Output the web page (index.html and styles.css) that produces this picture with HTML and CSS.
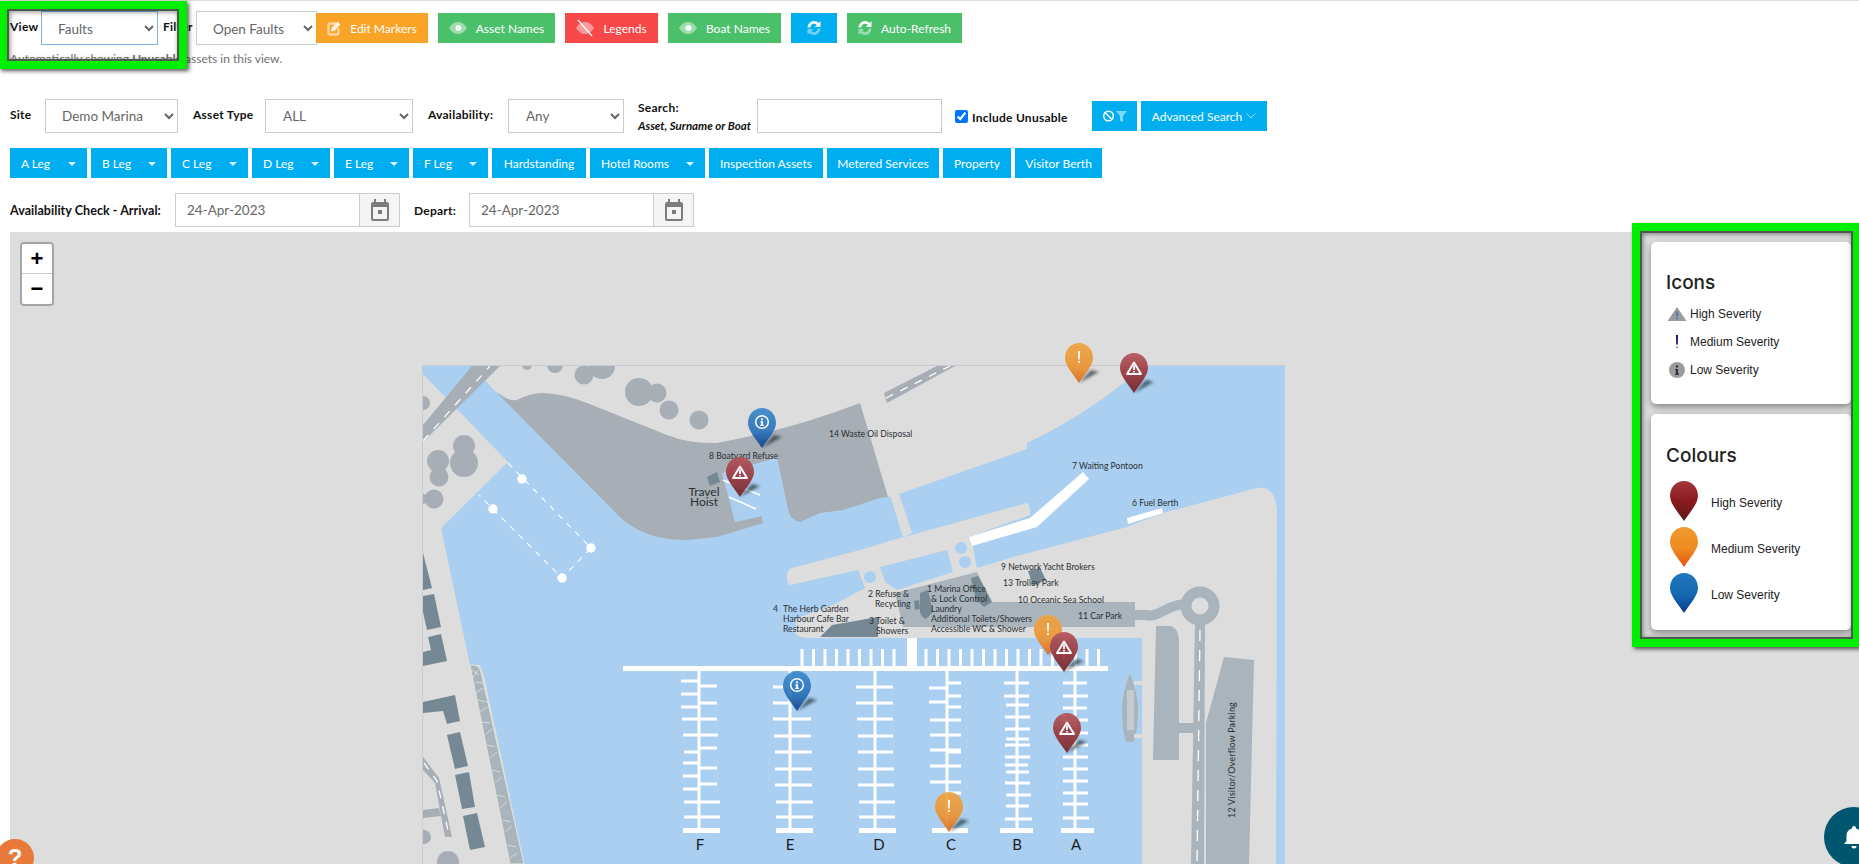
FILE: index.html
```html
<!DOCTYPE html>
<html lang="en">
<head>
    <meta charset="UTF-8">
    <title>Asset Map</title>
    <link rel="stylesheet" href="styles.css">
</head>
<body>
    <svg class="defs" width="0" height="0">
        <defs>
            <clipPath id="planClip"><rect x="422" y="365" width="863" height="499"/></clipPath>
            <linearGradient id="gradRed" x1="0" y1="0" x2="0" y2="1"><stop offset="0" stop-color="#b5545a"/><stop offset=".55" stop-color="#96343a"/><stop offset="1" stop-color="#6e2228"/></linearGradient>
            <linearGradient id="gradOrange" x1="0" y1="0" x2="0" y2="1"><stop offset="0" stop-color="#f0a33f"/><stop offset=".6" stop-color="#ea9432"/><stop offset="1" stop-color="#dc6a1c"/></linearGradient>
            <linearGradient id="gradBlue" x1="0" y1="0" x2="0" y2="1"><stop offset="0" stop-color="#3a8ccb"/><stop offset=".6" stop-color="#2a70b8"/><stop offset="1" stop-color="#123f8c"/></linearGradient>
            <linearGradient id="legRed" x1="0" y1="0" x2="0" y2="1"><stop offset="0" stop-color="#a3383c"/><stop offset=".5" stop-color="#8b1a1e"/><stop offset="1" stop-color="#5c1a1c"/></linearGradient>
            <linearGradient id="legOrange" x1="0" y1="0" x2="0" y2="1"><stop offset="0" stop-color="#f19a30"/><stop offset=".55" stop-color="#ee8a20"/><stop offset="1" stop-color="#e4530c"/></linearGradient>
            <linearGradient id="legBlue" x1="0" y1="0" x2="0" y2="1"><stop offset="0" stop-color="#1f78bf"/><stop offset=".55" stop-color="#1468b0"/><stop offset="1" stop-color="#0b3a8c"/></linearGradient>
            <filter id="blur"><feGaussianBlur stdDeviation="1.6"/></filter>
            <path id="drop" d="M14 0C6 0 0 6.500 0 15C0 22 7 30 14 40C21 30 28 22 28 15C28 6.500 22 0 14 0Z"/>
            <symbol id="pinShadow" viewBox="0 0 52 44" overflow="visible">
                <path d="M14 40L30 31L34 29L26 27Z" fill="#1d2a33" opacity=".75" filter="url(#blur)"/>
            </symbol>
            <symbol id="pinRed" viewBox="0 0 28 40">
                <use href="#drop" fill="url(#gradRed)"/>
                <path d="M14 9.500L21 21H7Z" fill="none" stroke="#fff" stroke-width="2" stroke-linejoin="round"/>
                <path d="M13.100 12.500h1.800v4.500h-1.800zM13.100 18h1.800v1.600h-1.800z" fill="#fff"/>
            </symbol>
            <symbol id="pinOrange" viewBox="0 0 28 40">
                <use href="#drop" fill="url(#gradOrange)"/>
                <path d="M13 8h2l-.3 8.500h-1.400zM13.100 18h1.800v2h-1.800z" fill="#fff"/>
            </symbol>
            <symbol id="pinBlue" viewBox="0 0 28 40">
                <use href="#drop" fill="url(#gradBlue)"/>
                <circle cx="14" cy="14" r="6.300" fill="none" stroke="#fff" stroke-width="1.500"/>
                <path d="M13 10.500h2v1.800h-2zM12.300 13.300h2.700v3.500h1v1.200h-3.800v-1.200h1v-2.300h-.9z" fill="#fff"/>
            </symbol>
            <symbol id="iconEye" viewBox="0 0 18 14">
                <path d="M0 7C3 2.500 6 1 9 1C12 1 15 2.500 18 7C15 11.500 12 13 9 13C6 13 3 11.500 0 7Z" fill="#fff" opacity=".45"/>
                <circle cx="9.500" cy="7" r="3" fill="#fff" opacity=".9"/>
            </symbol>
            <symbol id="iconEyeOff" viewBox="0 0 18 18">
                <path d="M0 9C3 4.500 6 3 9 3C12 3 15 4.500 18 9C15 13.500 12 15 9 15C6 15 3 13.500 0 9Z" fill="#fff" opacity=".45"/>
                <path d="M2 1L16 17" stroke="#fff" stroke-width="1.500" opacity=".95"/>
            </symbol>
            <symbol id="iconEdit" viewBox="0 0 14 16">
                <path d="M9.500 3.500H3.500Q1.500 3.500 1.500 5.500V12.500Q1.500 14.500 3.500 14.500H9.500Q11.500 14.500 11.500 12.500V8.500" fill="none" stroke="#fff" stroke-width="2.400" opacity=".55"/>
                <path d="M4.500 8L10.500 1.500L13.500 4.500L7.500 11L4 11.500Z" fill="#fff" opacity=".85"/>
            </symbol>
            <symbol id="iconRefresh" viewBox="0 0 14 16">
                <path d="M.5 7.500C1 3.500 3.800 1 7 1C9.100 1 10.600 1.800 11.600 2.900L13.500 1V7H7.700L9.800 4.900C9.100 4.200 8.200 3.800 7 3.800C5.100 3.800 3.700 5.100 3.300 7.500Z" fill="#fff" opacity=".95"/>
                <path d="M13.500 8.500C13 12.500 10.200 15 7 15C4.900 15 3.400 14.200 2.400 13.100L.5 15V9H6.300L4.200 11.100C4.900 11.800 5.800 12.200 7 12.200C8.900 12.200 10.300 10.900 10.700 8.500Z" fill="#fff" opacity=".45"/>
            </symbol>
            <symbol id="iconCal" viewBox="0 0 18 22">
                <path d="M3 0h2v3h8V0h2v3h1a2 2 0 0 1 2 2v15a2 2 0 0 1-2 2H2a2 2 0 0 1-2-2V5a2 2 0 0 1 2-2h1zM2 8v12h14V8zM7 11h4v4H7z" fill="#7d7d7d" fill-rule="evenodd"/>
            </symbol>
        </defs>
    </svg>

    <div class="page">
        <div class="row row-view">
            <label class="lbl lbl-view">View</label>
            <select class="sel sel-view focus"><option>Faults</option></select>
            <label class="lbl lbl-filter">Filter</label>
            <select class="sel sel-filter"><option>Open Faults</option></select>
            <button class="btn amber b-edit"><svg class="ico i-edit"><use href="#iconEdit"/></svg>Edit Markers</button>
            <button class="btn green b-asset"><svg class="ico i-eye"><use href="#iconEye"/></svg>Asset Names</button>
            <button class="btn red b-legend"><svg class="ico i-eyeoff"><use href="#iconEyeOff"/></svg>Legends</button>
            <button class="btn green b-boat"><svg class="ico i-eye"><use href="#iconEye"/></svg>Boat Names</button>
            <button class="btn blue b-refresh"><svg class="ico i-refresh"><use href="#iconRefresh"/></svg></button>
            <button class="btn green b-auto"><svg class="ico i-refresh"><use href="#iconRefresh"/></svg>Auto-Refresh</button>
        </div>
        <p class="hint">Automatically showing <b>Unusable</b> assets in this view.</p>

        <div class="row row-search">
            <label class="lbl lbl-site">Site</label>
            <select class="sel sel-site"><option>Demo Marina</option></select>
            <label class="lbl lbl-type">Asset Type</label>
            <select class="sel sel-type"><option>ALL</option></select>
            <label class="lbl lbl-avail">Availability:</label>
            <select class="sel sel-avail"><option>Any</option></select>
            <div class="search-label">
                <span class="lbl">Search:</span>
                <em>Asset, Surname or Boat</em>
            </div>
            <input class="search-box" type="text">
            <label class="lbl include"><input type="checkbox" checked>Include Unusable</label>
            <button class="btn blue b-clear">
                <svg class="i-clear" viewBox="0 0 26 14"><circle cx="6.500" cy="7" r="4.800" fill="none" stroke="#fff" stroke-width="1.500"/><path d="M3 3.500L10 10.500" stroke="#fff" stroke-width="1.500"/><path d="M14 2h11l-4 5v6l-3-1.500V7z" fill="#fff" opacity=".5"/></svg>
            </button>
            <button class="btn blue b-adv">Advanced Search<svg class="i-chev" viewBox="0 0 10 6"><path d="M.5.500L5 5L9.500.500" fill="none" stroke="#fff" stroke-width="1" opacity=".6"/></svg></button>
        </div>

        <div class="row row-legs">
            <button class="btn blue leg w77">A Leg<i class="caret"></i></button>
            <button class="btn blue leg w76">B Leg<i class="caret"></i></button>
            <button class="btn blue leg w77">C Leg<i class="caret"></i></button>
            <button class="btn blue leg w78">D Leg<i class="caret"></i></button>
            <button class="btn blue leg w75">E Leg<i class="caret"></i></button>
            <button class="btn blue leg w75">F Leg<i class="caret"></i></button>
            <button class="btn blue plain w94">Hardstanding</button>
            <button class="btn blue leg w115">Hotel Rooms<i class="caret"></i></button>
            <button class="btn blue plain w114">Inspection Assets</button>
            <button class="btn blue plain w112">Metered Services</button>
            <button class="btn blue plain w68">Property</button>
            <button class="btn blue plain w87">Visitor Berth</button>
        </div>

        <div class="row row-dates">
            <label class="lbl lbl-arrival">Availability Check - Arrival:</label>
            <div class="date"><input type="text" value="24-Apr-2023"><span class="addon"><svg class="i-cal"><use href="#iconCal"/></svg></span></div>
            <label class="lbl lbl-depart">Depart:</label>
            <div class="date"><input type="text" value="24-Apr-2023"><span class="addon"><svg class="i-cal"><use href="#iconCal"/></svg></span></div>
        </div>

        <div class="map">
            <svg class="plan" viewBox="422 340 863 524" width="863" height="524">
                <g clip-path="url(#planClip)">
                <!-- water -->
                <rect x="422" y="365" width="863" height="499" fill="#aacff0"/>

                <!-- land -->
                <g fill="#dddddd">
                    <path d="M422 373L508 462L441 528L470 665L480 665L485 680L524 864H422Z"/>
                    <path d="M471 365H1137L1125 382Q1080 418 1027 443V449L899 494L888 497L860 470L700 480L600 450L496 392Z"/>
                    <path d="M890 495L899 494L912 533L903 537Z"/>
                    <path d="M787 576Q787 570 792 568L860 550L893 540L1027 503Q1030 503 1030 515L969 537L973 547L977 568L1013 557L1127 527L1163 513L1257 488Q1275 485 1277 510L1276 864H1142V638H806Q795 636 795 632L797 618L833 605L865 588L858 570L790 585Q786 582 787 576Z"/>
                </g>
                <g fill="#aacff0">
                    <path d="M880 567L947 550L953 572L897 590L885 582Z"/>
                    <circle cx="870" cy="577" r="6"/>
                    <circle cx="961" cy="548" r="6"/>
                    <circle cx="965" cy="562" r="6"/>
                </g>

                <!-- quay -->
                <path fill="#a7aeb5" d="M496 392Q508 402 517 400Q530 393 543 393Q565 394 587 403L667 435Q690 444 717 443Q790 430 860 403L888 497L880 498L843 510L820 513L800 522Q790 520 788 510L777 458L727 472L735 522L762 516L763 523L717 537L687 540Q660 540 643 532Q625 524 613 510Z"/>
                <path fill="#aacff0" d="M722 473L777 458L788 510Q790 520 800 522L763 523L762 516L735 522Z"/>

                <g fill="#a7aeb5">
                    <circle cx="639" cy="392" r="14"/><circle cx="657" cy="393" r="9.500"/><circle cx="669" cy="410" r="9.500"/><circle cx="699" cy="420" r="9.500"/>
                    <circle cx="584" cy="375" r="9.500"/><circle cx="602" cy="366" r="13"/><circle cx="555" cy="365" r="8"/><circle cx="527" cy="365" r="5"/>
                    <circle cx="464" cy="446" r="11"/><circle cx="464" cy="463" r="14"/><circle cx="438" cy="461" r="11"/><circle cx="439" cy="477" r="9.500"/>
                    <circle cx="434" cy="499" r="9.500"/><circle cx="423" cy="499" r="5"/><circle cx="423" cy="403" r="7"/>
                    <circle cx="424" cy="837" r="7"/><circle cx="448" cy="862" r="11"/>
                    <path d="M423 425L472 366H500L423 442Z"/>
                    <path d="M884 393L887 403L955 366H937Z"/>
                    <path d="M423 757L439 778L452 837L445 837L435 783L423 770Z"/>
                    <path d="M423 810L439 808L441 816L423 818Z"/>
                </g>
                <g fill="none" stroke="#fff" stroke-width="1.300" stroke-dasharray="8 8">
                    <path d="M423 441L490 366"/>
                    <path d="M886 398L950 366"/>
                    <path d="M424 763L437 781L449 835"/>
                </g>
                <g fill="none" stroke="#fff" stroke-width="1.100" stroke-dasharray="6 6">
                    <path d="M508 463L591 548L562 578L479 495"/>
                </g>
                <g fill="#fff">
                    <circle cx="522" cy="479" r="4.700"/><circle cx="591" cy="548" r="4.700"/><circle cx="562" cy="578" r="4.700"/><circle cx="493" cy="509" r="4.700"/>
                </g>

                <!-- west buildings -->
                <g fill="#768894">
                    <path d="M423 553L432 588L423 590Z"/>
                    <path d="M423 596L434 594L441 627L427 630L423 612Z"/>
                    <path d="M423 652L431 650L428 637L441 634L447 661L423 666Z"/>
                    <path d="M423 702L455 695L460 721L447 724L443 711L423 713Z"/>
                    <path d="M447 735L460 732L468 766L455 769Z"/>
                    <path d="M455 775L469 772L475 807L462 809Z"/>
                    <path d="M463 816L477 813L485 847L470 850Z"/>
                    <path d="M707 477L717 472L720 482L710 486Z"/>
                </g>

                <!-- footbridge -->
                <path d="M470 665Q479 664 481 672L524 864H510Z" fill="#a9b4bc" stroke="#e2e2dc" stroke-width="1"/>
                <path d="M472 670l7 5M473 678l5-8M475 682l8 1M476 693l7-5M478 700l8 2M480 712l7-5M482 722l8 1M485 735l7-6M487 745l8 2M490 758l7-6M492 770l8 2M495 783l7-6M497 795l8 2M500 808l7-6M503 820l8 2M505 832l7-6M508 845l8 2M510 858l7-5" stroke="#e2e2dc" stroke-width=".8" fill="none"/>

                <!-- travel hoist -->
                <g stroke="#fff" stroke-width="1.800"><path d="M723 480L760 495"/><path d="M729 497L756 509"/></g>

                <!-- car park and roads -->
                <g fill="#a9b4bc">
                    <path d="M895 593L977 572L992 602H1135V627H903Z"/>
                    <path d="M1156 626H1171Q1178 628 1179 640V723H1194V733H1179V760H1153Z"/>
                    <path d="M1224 657L1254 660L1249 864H1206V723Z"/>
                    <path d="M1195 620H1205L1204 864H1191Z"/>
                    <path d="M1130 673Q1138 695 1138 708Q1138 730 1134 742H1126Q1122 730 1122 708Q1122 695 1130 673Z"/>
                </g>
                <path d="M1135 615H1146C1160 618 1165 605 1185 604" fill="none" stroke="#a9b4bc" stroke-width="10"/>
                <circle cx="1200" cy="606" r="14" fill="#dddddd" stroke="#a9b4bc" stroke-width="11"/>
                <path d="M1200 630L1197 864" stroke="#fff" stroke-width="1.300" stroke-dasharray="11 9"/>
                <rect x="1127" y="690" width="7" height="40" fill="#c4ccd2"/>
                <path d="M1134 681h8v4h-8zM1134 734h8v4h-8z" fill="#dddddd"/>
                <g fill="#768894">
                    <path d="M920 593L928 590L933 612L926 619Q921 617 920 612Z"/>
                    <path d="M971 578L978 576L992 602L984 607L976 600Z"/>
                    <path d="M914 601L919 600L920 609L915 610Z"/>
                    <path d="M1028 571L1040 568L1046 580L1033 586Z"/>
                    <path d="M820 637L832 625L878 617V637Z"/>
                </g>

                <!-- pontoons -->
                <path fill="#fff" d="M969 537L1030 518L1083 472L1089 479L1037 527L972 546Z"/>
                <path fill="#fff" d="M1127 518L1162 508L1163 513L1128 524Z"/>
                <g fill="#fff">
                    <rect x="623" y="666" width="485" height="5"/>
                    <rect x="907" y="638" width="10" height="28"/>
                </g>
                <path stroke="#fff" stroke-width="3" fill="none" d="M802 649v17M813.500 649v17M825 649v17M836.500 649v17M848 649v17M859.500 649v17M871 649v17M882.500 649v17M894 649v17M926 649v17M937.500 649v17M949 649v17M960.500 649v17M972 649v17M983.500 649v17M995 649v17M1006.500 649v17M1018 649v17M1029.500 649v17M1041 649v17M1052.500 649v17M1064 649v17M1075.500 649v17M1087 649v17M1098.500 649v17"/>
                <g stroke="#fff" stroke-width="3" fill="none">
                    <path d="M699 671V830M681 681h18M699 686h18M681 694h18M699 703h18M681 707h18M682 719h35M683 735h35M699 748h18M684 752h15M683 763h15M699 768h18M683 776h15M699 784h18M683 789h15M684 802h36M684 817h36"/>
                    <path d="M790 671V830M773 687h18M773 703h18M773 719h38M774 736h37M775 752h37M775 769h37M775 785h37M776 802h37M776 817h37"/>
                    <path d="M875 671V830M856 687h37M856 703h37M857 719h36M858 736h35M858 752h35M858 769h36M858 785h36M859 802h36M859 817h36"/>
                    <path d="M947 671V830M947 683h14M929 688h18M947 696h14M929 702h18M947 707h14M930 720h31M947 735h14M930 735h18M930 750h31M947 752h14M930 766h31M930 782h31M947 793h14"/>
                    <path d="M1017 671V830M1004 683h25M1004 696h25M1006 705h23M1005 717h25M1005 729h25M1006 739h23M1005 745h25M1005 757h25M1005 765h23M1006 772h23M1005 783h25M1006 795h25M1006 806h23M1005 819h27"/>
                    <path d="M1075 671V830M1063 683h24M1063 696h25M1063 708h24M1063 720h25M1063 733h25M1063 745h25M1063 757h25M1063 769h25M1063 781h25M1063 793h25M1063 804h25M1063 818h26"/>
                </g>
                <g fill="#fff">
                    <rect x="683" y="828" width="37" height="5"/><rect x="776" y="828" width="37" height="5"/><rect x="859" y="828" width="37" height="5"/>
                    <rect x="932" y="828" width="36" height="5"/><rect x="1000" y="828" width="33" height="5"/><rect x="1061" y="828" width="33" height="5"/>
                </g>

                <!-- image edge -->
                <path d="M422.500 864V365.500H1285" fill="none" stroke="#c6ccd2" stroke-width="1"/>

                <!-- labels -->
                <g class="map-label">
                    <text x="829" y="437">14 Waste Oil Disposal</text>
                    <text x="709" y="459">8 Boatyard Refuse</text>
                    <text x="1072" y="469">7 Waiting Pontoon</text>
                    <text x="1132" y="506">6 Fuel Berth</text>
                    <text x="1001" y="570">9 Network Yacht Brokers</text>
                    <text x="1003" y="586">13 Trolley Park</text>
                    <text x="1018" y="603">10 Oceanic Sea School</text>
                    <text x="1078" y="619">11 Car Park</text>
                    <text x="927" y="592">1 Marina Office</text>
                    <text x="931" y="602">&amp; Lock Control</text>
                    <text x="931" y="612">Laundry</text>
                    <text x="931" y="622">Additional Toilets/Showers</text>
                    <text x="931" y="632">Accessible WC &amp; Shower</text>
                    <text x="868" y="597">2 Refuse &amp;</text>
                    <text x="875" y="607">Recycling</text>
                    <text x="869" y="624">3 Toilet &amp;</text>
                    <text x="876" y="634">Showers</text>
                    <text x="773" y="612">4</text>
                    <text x="783" y="612">The Herb Garden</text>
                    <text x="783" y="622">Harbour Cafe Bar</text>
                    <text x="783" y="632">Restaurant</text>
                    <text class="overflow" transform="translate(1235 818) rotate(-90)">12 Visitor/Overflow Parking</text>
                    <text class="hoist" x="704" y="496" text-anchor="middle">Travel</text>
                    <text class="hoist" x="704" y="506" text-anchor="middle">Hoist</text>
                </g>
                <g class="map-letter" text-anchor="middle">
                    <text x="700" y="850">F</text><text x="790" y="850">E</text><text x="879" y="850">D</text>
                    <text x="951" y="850">C</text><text x="1017" y="850">B</text><text x="1076" y="850">A</text>
                </g>
                </g>

                <!-- markers -->
                <g class="marker">
                    <use href="#pinShadow" x="1065" y="343" width="52" height="44"/><use href="#pinOrange" x="1065" y="343" width="28" height="40"/>
                    <use href="#pinShadow" x="1120" y="353" width="52" height="44"/><use href="#pinRed" x="1120" y="353" width="28" height="40"/>
                    <use href="#pinShadow" x="748" y="408" width="52" height="44"/><use href="#pinBlue" x="748" y="408" width="28" height="40"/>
                    <use href="#pinShadow" x="726" y="457" width="52" height="44"/><use href="#pinRed" x="726" y="457" width="28" height="40"/>
                    <use href="#pinShadow" x="1034" y="615" width="52" height="44"/><use href="#pinOrange" x="1034" y="615" width="28" height="40"/>
                    <use href="#pinShadow" x="1050" y="632" width="52" height="44"/><use href="#pinRed" x="1050" y="632" width="28" height="40"/>
                    <use href="#pinShadow" x="1053" y="713" width="52" height="44"/><use href="#pinRed" x="1053" y="713" width="28" height="40"/>
                    <use href="#pinShadow" x="783" y="671" width="52" height="44"/><use href="#pinBlue" x="783" y="671" width="28" height="40"/>
                    <use href="#pinShadow" x="935" y="792" width="52" height="44"/><use href="#pinOrange" x="935" y="792" width="28" height="40"/>
                </g>
            </svg>

            <div class="zoom-ctl">
                <a class="zoom-btn">+</a>
                <a class="zoom-btn">&minus;</a>
            </div>

            <div class="legends">
                <div class="legend-card card-icons">
                    <h4>Icons</h4>
                    <div class="icon-row">
                        <svg class="leg-ico" viewBox="0 0 20 16"><path d="M10 1L19.500 15H.5Z" fill="#9c9c9c"/><path d="M9.300 5.500h1.400v5h-1.400zM9.300 11.800h1.400v1.500h-1.400z" fill="#2a6fc0"/></svg>
                        <span>High Severity</span>
                    </div>
                    <div class="icon-row">
                        <svg class="leg-ico" viewBox="0 0 20 16"><path d="M9 1h2l-.2 9.500H9.200z" fill="#14146a"/><path d="M9.100 12h1.800v2.500H9.100z" fill="#aaa"/></svg>
                        <span>Medium Severity</span>
                    </div>
                    <div class="icon-row">
                        <svg class="leg-ico" viewBox="0 0 20 16"><circle cx="10" cy="8" r="8" fill="#9c9c9c"/><path d="M9 3.500h2v2H9zM8 7h3v4.500h1v1.200H8v-1.200h1V8.200H8z" fill="#2a2a3a"/></svg>
                        <span>Low Severity</span>
                    </div>
                </div>
                <div class="legend-card card-colours">
                    <h4>Colours</h4>
                    <div class="colour-row"><svg class="leg-pin" viewBox="0 0 28 40"><use href="#drop" fill="url(#legRed)"/></svg><span>High Severity</span></div>
                    <div class="colour-row"><svg class="leg-pin" viewBox="0 0 28 40"><use href="#drop" fill="url(#legOrange)"/></svg><span>Medium Severity</span></div>
                    <div class="colour-row"><svg class="leg-pin" viewBox="0 0 28 40"><use href="#drop" fill="url(#legBlue)"/></svg><span>Low Severity</span></div>
                </div>
            </div>
        </div>
    </div>

    <!-- annotation boxes and floating buttons -->
    <div class="callout callout-view"></div>
    <div class="callout callout-legend"></div>
    <div class="help-fab">?</div>
    <div class="bell-fab">
        <svg viewBox="0 0 24 24" width="24" height="24"><path d="M12 1a2 2 0 0 1 2 2v.6c3.500.9 5.500 3.800 5.500 7.400v5l2.500 3H2l2.500-3v-5c0-3.600 2-6.500 5.500-7.400V3a2 2 0 0 1 2-2zM9.500 21h5a2.500 2.500 0 0 1-5 0z" fill="#fff"/></svg>
    </div>
</body>
</html>
```

FILE: styles.css
```css
* {
    box-sizing: border-box;
}

html, body {
    margin: 0;
    height: 864px;
    overflow: hidden;
}

body {
    font-family: Lato, "Open Sans", sans-serif;
    font-size: 13px;
    color: #555;
    background-color: #fff;
    position: relative;
}

.defs {
    position: absolute;
}

.page {
    border-top: 1px solid #ddd;
    padding-left: 10px;
}

.row {
    display: flex;
    align-items: center;
}

.row-view {
    height: 34px;
    margin-top: 10px;
}

.row-view .lbl,
.row-search > .lbl:not(.include) {
    padding-bottom: 4px;
}

.row-view .sel {
    padding-top: 2px;
}

.hint {
    margin: 7px 0 0;
    height: 14px;
    line-height: 14px;
    font-size: 12px;
    color: #6f6f6f;
}

.row-search {
    height: 34px;
    margin-top: 33px;
}

.row-legs {
    height: 30px;
    margin-top: 15px;
    gap: 4px;
}

.row-dates {
    height: 34px;
    margin-top: 15px;
}

.lbl {
    font-weight: 700;
    font-size: 12px;
    letter-spacing: .25px;
    color: #111;
}

.lbl-view { width: 31px; }
.lbl-filter { width: 33px; margin-left: 5px; }
.lbl-site { width: 35px; }
.lbl-type { width: 72px; margin-left: 15px; }
.lbl-avail { width: 80px; margin-left: 15px; }
.lbl-arrival { width: 165px; font-size: 12.5px; letter-spacing: .05px; }
.lbl-depart { width: 55px; margin-left: 14px; }

.sel {
    height: 34px;
    border: 1px solid #ccc;
    border-radius: 0;
    background-color: #fff;
    padding: 0 0 0 12px;
    font-family: inherit;
    font-size: 13.5px;
    color: #666;
}

.sel.focus { border-color: #7db4e8; }

.sel-view { width: 117px; }
.sel-filter { width: 121px; }
.sel-site { width: 133px; }
.sel-type { width: 148px; padding-left: 13px; }
.sel-avail { width: 116px; padding-left: 13px; }

.btn {
    height: 30px;
    border: none;
    padding: 0;
    color: #fff;
    font-family: inherit;
    font-size: 12px;
    display: inline-flex;
    align-items: center;
    justify-content: center;
    cursor: pointer;
}

.amber { background-color: #faa427; }
.green { background-color: #4bc06b; }
.red { background-color: #f94848; }
.blue { background-color: #00aeef; }

.b-edit { width: 112px; margin-left: -1px; }
.b-asset { width: 117px; margin-left: 10px; }
.b-legend { width: 93px; margin-left: 10px; }
.b-boat { width: 113px; margin-left: 10px; }
.b-refresh { width: 46px; margin-left: 10px; }
.b-auto { width: 115px; margin-left: 10px; }

.ico {
    display: block;
    margin-right: 9px;
}

.i-edit { width: 14px; height: 16px; }
.i-eye { width: 18px; height: 14px; }
.i-eyeoff { width: 18px; height: 18px; }
.i-refresh { width: 14px; height: 16px; }
.b-refresh .ico { margin-right: 0; }

.search-label {
    margin-left: 14px;
    width: 119px;
    display: flex;
    flex-direction: column;
    gap: 4px;
}

.search-label em {
    font-weight: 700;
    font-size: 11.5px;
    color: #111;
}

.search-box {
    width: 185px;
    height: 34px;
    border: 1px solid #ccc;
    outline: none;
}

.include {
    display: flex;
    align-items: center;
    margin-left: 13px;
    padding-top: 2px;
    width: 137px;
}

.include input {
    width: 13px;
    height: 13px;
    margin: 0 4px 2px 0;
}

.b-clear { width: 45px; }
.b-adv { width: 126px; margin-left: 4px; }

.i-clear { width: 26px; height: 14px; }

.i-chev {
    width: 10px;
    height: 6px;
    margin-left: 4px;
}

.leg {
    justify-content: flex-start;
    padding-left: 11px;
    position: relative;
}

.caret {
    position: absolute;
    right: 11px;
    top: 14px;
    border-top: 4px solid #fff;
    border-left: 4px solid transparent;
    border-right: 4px solid transparent;
    opacity: .85;
}

.w68 { width: 68px; }
.w75 { width: 75px; }
.w76 { width: 76px; }
.w77 { width: 77px; }
.w78 { width: 78px; }
.w87 { width: 87px; }
.w94 { width: 94px; }
.w112 { width: 112px; }
.w114 { width: 114px; }
.w115 { width: 115px; }

.date {
    display: flex;
    width: 225px;
    height: 34px;
    border: 1px solid #ccc;
}

.date input {
    flex: 1;
    min-width: 0;
    border: none;
    outline: none;
    padding: 0 0 0 11px;
    font-family: inherit;
    font-size: 13.5px;
    color: #666;
}

.addon {
    width: 40px;
    background-color: #f5f5f5;
    border-left: 1px solid #ccc;
    display: flex;
    align-items: center;
    justify-content: center;
}

.i-cal {
    width: 18px;
    height: 22px;
}

.map {
    position: relative;
    margin-top: 5px;
    height: 632px;
    background-color: #ddd;
    overflow: hidden;
}

.plan {
    position: absolute;
    left: 412px;
    top: 108px;
    overflow: hidden;
}

.map-label text {
    font-family: Lato, sans-serif;
    font-size: 8.6px;
    fill: #2b2f33;
}

.map-label .hoist {
    font-size: 12px;
}

.map-label .overflow {
    font-size: 9px;
    letter-spacing: .2px;
}

.map-letter text {
    font-family: Lato, sans-serif;
    font-size: 15px;
    fill: #1c2024;
}

.marker {
    opacity: .92;
}

.zoom-ctl {
    position: absolute;
    left: 10px;
    top: 10px;
    width: 34px;
    border: 2px solid rgba(0, 0, 0, .25);
    border-radius: 4px;
    background-clip: padding-box;
    overflow: hidden;
}

.zoom-btn {
    display: block;
    height: 30px;
    background-color: #fff;
    color: #000;
    font-family: "Liberation Sans", sans-serif;
    font-weight: 700;
    font-size: 22px;
    line-height: 30px;
    text-align: center;
}

.zoom-btn:first-child {
    border-bottom: 1px solid #ccc;
}

.legends {
    position: absolute;
    left: 1641px;
    top: 10px;
    width: 200px;
    display: flex;
    flex-direction: column;
    gap: 10px;
    font-family: "Liberation Sans", sans-serif;
    font-size: 12px;
    color: #222;
}

.legend-card {
    background-color: #fff;
    border-radius: 5px;
    box-shadow: 0 3px 7px rgba(0, 0, 0, .4);
    padding: 0 16px;
}

.legend-card h4 {
    margin: 0 0 0 -1px;
    font-family: Inter, sans-serif;
    font-weight: 500;
    font-size: 19px;
    line-height: 22px;
    color: #222;
}

.card-icons {
    height: 162px;
    padding-top: 30px;
}

.card-colours {
    height: 216px;
    padding-top: 31px;
}

.icon-row {
    display: flex;
    align-items: center;
    height: 28px;
}

.card-icons h4 {
    margin-bottom: 6px;
}

.leg-ico {
    width: 20px;
    height: 16px;
    margin-right: 3px;
    flex: none;
}

.card-colours h4 {
    margin-bottom: 11px;
}

.colour-row {
    display: flex;
    align-items: center;
    height: 46px;
    padding-left: 3px;
}

.leg-pin {
    width: 28px;
    height: 40px;
    margin-right: 13px;
    flex: none;
}

.colour-row span {
    padding-top: 4px;
}

.callout {
    position: absolute;
    border: 8px solid #00ee00;
    box-shadow: 2px 2px 4px rgba(0, 0, 0, .65), inset 0 0 0 2px #4c5a4c, inset 1px 1px 5px 2px rgba(0, 0, 0, .45);
}

.callout-view {
    left: -1px;
    top: 1px;
    width: 188px;
    height: 68px;
}

.callout-legend {
    left: 1632px;
    top: 223px;
    width: 229px;
    height: 424px;
}

.help-fab {
    position: absolute;
    left: -4px;
    top: 839px;
    width: 38px;
    height: 38px;
    border-radius: 50%;
    background-color: #e8793a;
    color: #fff;
    font-family: "Liberation Sans", sans-serif;
    font-weight: 700;
    font-size: 24px;
    line-height: 38px;
    text-align: center;
}

.bell-fab {
    position: absolute;
    left: 1824px;
    top: 807px;
    width: 60px;
    height: 60px;
    border-radius: 50%;
    background-color: #00566f;
    display: flex;
    align-items: center;
    justify-content: center;
}
```
